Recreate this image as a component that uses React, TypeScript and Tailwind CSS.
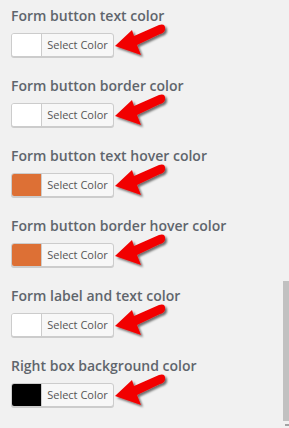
import React from "react";

const rows = [
  { label: "Form button text color", color: "#ffffff" },
  { label: "Form button border color", color: "#ffffff" },
  { label: "Form button text hover color", color: "#dd7035" },
  { label: "Form button border hover color", color: "#dd7035" },
  { label: "Form label and text color", color: "#ffffff" },
  { label: "Right box background color", color: "#000000" },
];

function Arrow() {
  return (
    <svg width="58" height="40" viewBox="0 0 58 40" className="absolute left-[102px] top-[-12px]">
      <defs>
        <filter id="sh" x="-20%" y="-20%" width="150%" height="160%">
          <feDropShadow dx="2" dy="2" stdDeviation="1.2" floodColor="#000" floodOpacity="0.55" />
        </filter>
      </defs>
      <path
        d="M2 25 L19 9 L21 15 L46 4 Q53 2 52 9 Q51 12 47 13 L24 24 L28 34 Z"
        fill="#f20000"
        filter="url(#sh)"
      />
    </svg>
  );
}

export default function App() {
  return (
    <div
      className="relative w-[289px] h-[428px] overflow-hidden bg-[#f1f1f1] pl-[11px] pt-[7px]"
      style={{ fontFamily: '"Open Sans", "Noto Sans", sans-serif' }}
    >
      <div className="flex flex-col gap-[20px]">
        {rows.map((r) => (
          <div key={r.label} className="flex flex-col gap-[8px]">
            <div className="text-[14px] leading-[18px] font-semibold text-[#5f656c]">{r.label}</div>
            <div className="relative h-[24px]">
              <div className="flex h-[24px] w-[103px] rounded-[3px] border border-[#cccccc] bg-[#f7f7f7] shadow-[0_1px_0_#cccccc] overflow-hidden">
                <div className="w-[30px] h-full border-r border-[#cccccc]" style={{ backgroundColor: r.color }} />
                <div className="flex-1 flex items-center justify-center text-[11px] text-[#555555]">Select Color</div>
              </div>
              <Arrow />
            </div>
          </div>
        ))}
      </div>
      <div className="absolute right-0 top-[281px] w-[6px] h-[140px] bg-[#c1c1c1]" />
      <div className="absolute right-0 top-[424px] w-[4px] h-[2px] bg-[#a3a3a3]" />
    </div>
  );
}
